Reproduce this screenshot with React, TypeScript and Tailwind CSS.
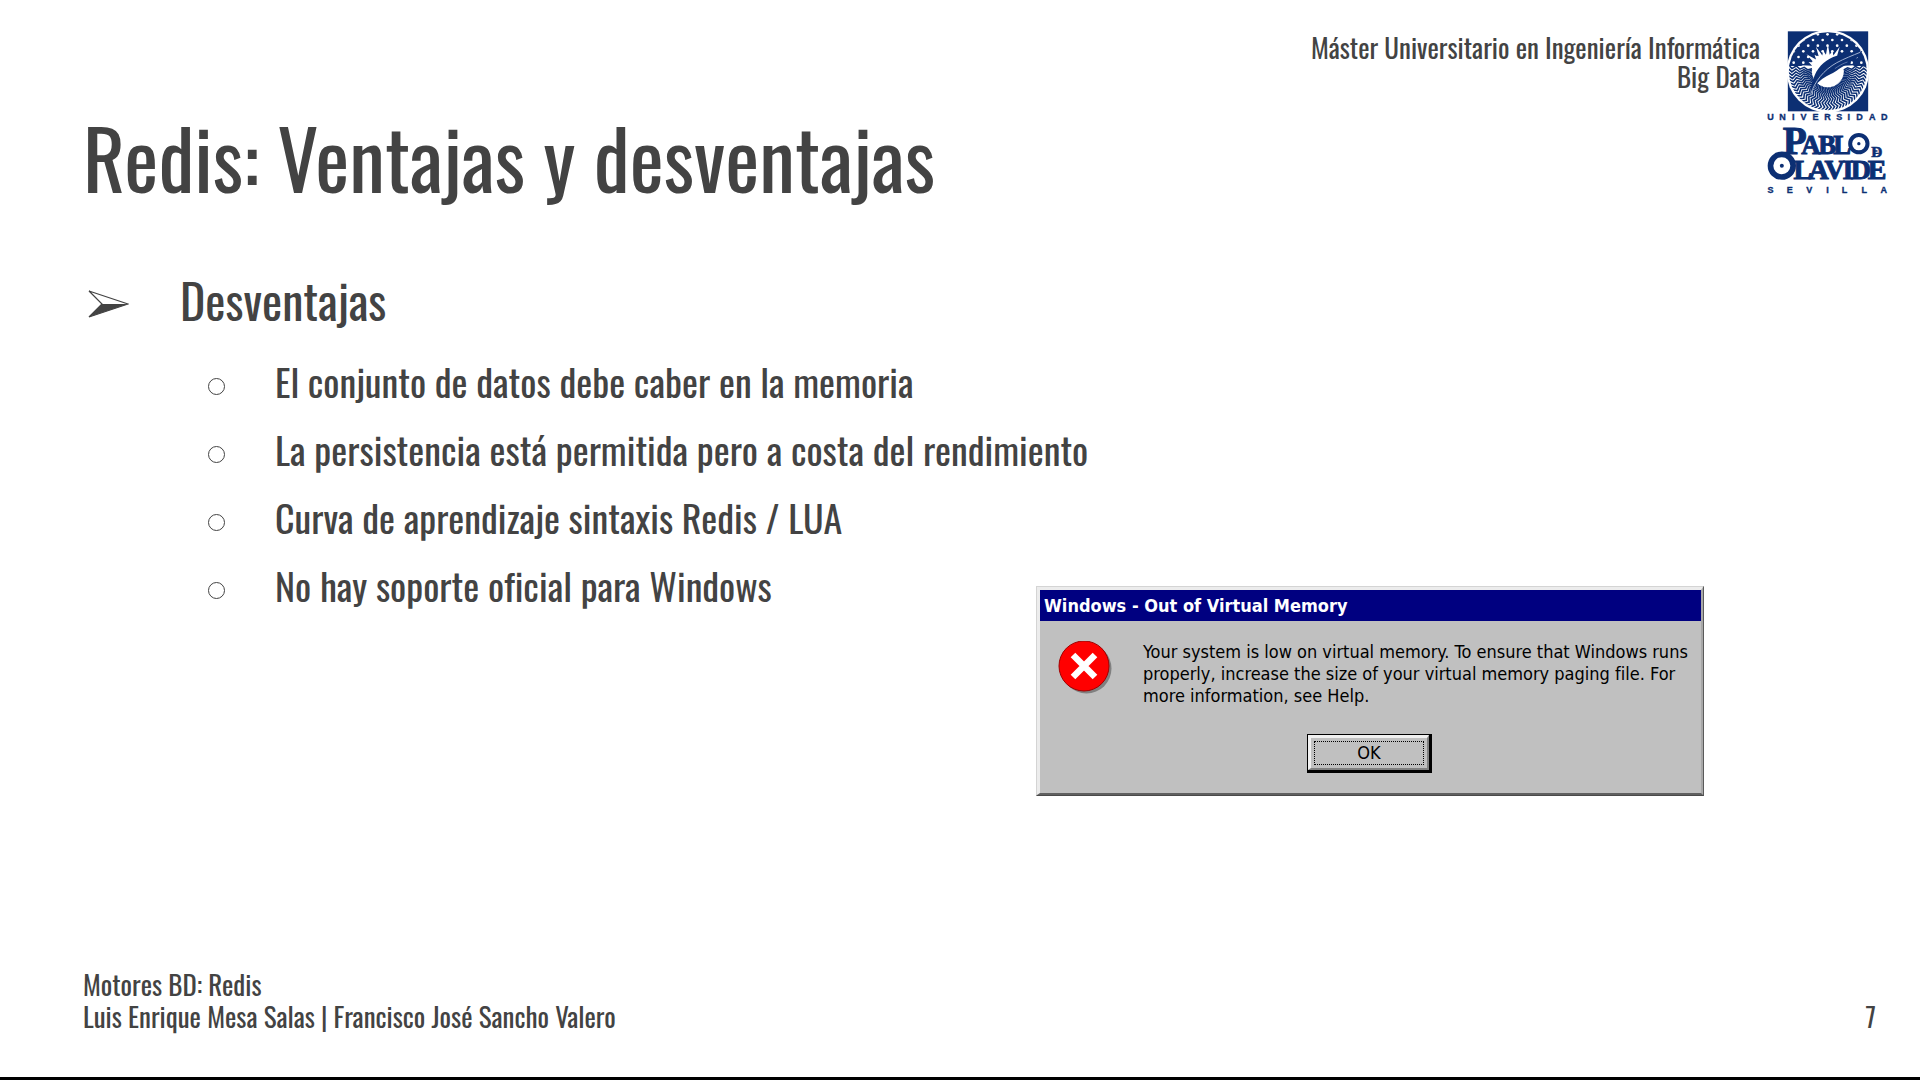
const NAVY = "#0c2f73";

const items = [
  "El conjunto de datos debe caber en la memoria",
  "La persistencia está permitida pero a costa del rendimiento",
  "Curva de aprendizaje sintaxis Redis / LUA",
  "No hay soporte oficial para Windows",
];

const CX = 265;
const CY = 184;

/* Wavy rays that fill the lower half of the seal. */
function wavyRay(index: number, count: number) {
  const base = (index / (count - 1)) * Math.PI * 1.08 - 0.13;
  const points: string[] = [];
  for (let step = 0; step <= 6; step++) {
    const radius = 48 + step * 12;
    const angle = base + (step % 2 === 0 ? 0.045 : -0.045);
    points.push(
      `${(CX + radius * Math.cos(angle)).toFixed(1)},${(CY + radius * Math.sin(angle)).toFixed(1)}`,
    );
  }
  return points.join(" ");
}

/* Spiked outline of the sun. */
function sunPoints() {
  const points: string[] = [];
  const spikes = 28;
  for (let i = 0; i < spikes * 2; i++) {
    const angle = (i / (spikes * 2)) * Math.PI * 2 - Math.PI / 2;
    const radius = i % 2 === 0 ? (i % 4 === 0 ? 82 : 64) : 50;
    points.push(`${(CX + radius * Math.cos(angle)).toFixed(1)},${(CY + radius * Math.sin(angle)).toFixed(1)}`);
  }
  return points.join(" ");
}

const stars: [number, number][] = [];
for (let row = 0; row < 6; row++) {
  for (let col = 0; col < 9; col++) {
    stars.push([148 + col * 29 + (row % 2) * 14.5, 73 + row * 17]);
  }
}

function Logo() {
  return (
    <svg
      viewBox="80 60 368 495"
      className="h-[165px] w-[123px] shrink-0"
      role="img"
      aria-label="Universidad Pablo de Olavide, Sevilla"
    >
      <defs>
        <clipPath id="seal">
          <circle cx={CX} cy={CY} r="117" />
        </clipPath>
        <clipPath id="sky">
          <rect x="140" y="60" width="250" height="108" />
        </clipPath>
      </defs>
      <rect x="145" y="64" width="241" height="240" fill={NAVY} />
      <circle cx={CX} cy={CY} r="124" fill="#fff" />
      <g clipPath="url(#seal)">
        {Array.from({ length: 38 }, (_, i) => (
          <polyline key={i} points={wavyRay(i, 38)} fill="none" stroke={NAVY} strokeWidth="4.6" />
        ))}
        <g clipPath="url(#sky)">
          <rect x="140" y="60" width="250" height="108" fill={NAVY} />
          {stars.map(([x, y]) => (
            <circle key={`${x}-${y}`} cx={x} cy={y} r="4" fill="#fff" />
          ))}
          <polygon points={sunPoints()} fill="#fff" />
        </g>
      </g>
      <path
        d="M211 258C213 236 216 216 226 195C238 166 262 146 292 137C318 129 345 129 368 123C364 139 348 148 330 152C338 154 336 159 324 162C304 171 292 184 274 192C256 200 240 212 229 224C221 234 217 246 211 258Z"
        fill={NAVY}
      />
      <path d="M213 254C226 214 252 180 292 158C314 146 340 136 362 127" fill="none" stroke="#9fb0d0" strokeWidth="3" />
      <path d="M286 176C298 168 310 160 324 156" fill="none" stroke="#7f95c0" strokeWidth="2" />
      <g fill={NAVY} stroke={NAVY} textAnchor="middle">
        <g className="font-['Liberation_Sans'] font-bold" fontSize="27" strokeWidth="1">
          <text x="93 129 161 192 228 264 299 328 360 398 434" y="330">
            UNIVERSIDAD
          </text>
          <text x="93 151 209 264 315 374 433" y="550">
            SEVILLA
          </text>
        </g>
        <g className="font-['Liberation_Serif'] font-bold" strokeWidth="3">
          <text x="166" y="431" fontSize="118">
            P
          </text>
          <text x="214 263 308" y="431" fontSize="80">
            ABL
          </text>
          <text x="190 237 285 325 364 413" y="507" fontSize="84">
            LAVIDE
          </text>
          <text x="412" y="440" fontSize="46" strokeWidth="2">
            D
          </text>
        </g>
      </g>
      <path d="M402 430H418M402 423H414" stroke={NAVY} strokeWidth="4" />
      <circle cx="358" cy="401" r="26" fill="#fff" stroke={NAVY} strokeWidth="12" />
      <circle cx="358" cy="401" r="5" fill={NAVY} />
      <circle cx="127" cy="467" r="34" fill="#fff" stroke={NAVY} strokeWidth="17" />
      <circle cx="127" cy="467" r="6" fill={NAVY} />
    </svg>
  );
}

function ErrorDialog() {
  return (
    <section
      aria-labelledby="dialog-title"
      className="-mt-[33px] mr-[216px] w-[668px] self-end border border-t-[#d4d4d4] border-r-[#5a5a5a] border-b-[#4a4a4a] border-l-[#d4d4d4] bg-[#c0c0c0] font-['DejaVu_Sans_Condensed','DejaVu_Sans',sans-serif] text-lg leading-[22px] text-black"
    >
      <div className="border-t-[3px] border-r-2 border-b-2 border-l-[3px] border-t-[#ececec] border-r-[#a8a8a8] border-b-[#606060] border-l-[#ececec] pb-5">
        <h2 id="dialog-title" className="bg-[#000080] pl-1 leading-[31px] font-bold text-white">
          Windows - Out of Virtual Memory
        </h2>
        <div className="flex items-start pt-5 pl-[18px]">
          <svg viewBox="0 0 54 54" className="h-[54px] w-[54px] shrink-0" aria-hidden="true">
            <circle cx="28.5" cy="27.5" r="25" fill="#808080" />
            <circle cx="26" cy="25" r="25" fill="#ff0000" stroke="#a00000" strokeWidth="1" />
            <path d="M15 14L37 36M37 14L15 36" stroke="#fff" strokeWidth="6.5" />
          </svg>
          <p className="ml-[31px]">
            Your system is low on virtual memory. To ensure that Windows runs
            <br />
            properly, increase the size of your virtual memory paging file. For
            <br />
            more information, see Help.
          </p>
        </div>
        <div className="mt-[27px] flex justify-center pr-0.5">
          <button
            type="button"
            className="h-[39px] w-[125px] border border-r-[3px] border-b-[3px] border-black bg-[#c0c0c0]"
          >
            <span className="flex h-full items-center justify-center border-t-[3px] border-r-2 border-b-2 border-l-[3px] border-t-[#f0f0f0] border-r-[#808080] border-b-[#808080] border-l-[#f0f0f0] p-[3px]">
              <span className="flex h-full w-full items-center justify-center border border-dotted border-black">
                OK
              </span>
            </span>
          </button>
        </div>
      </div>
    </section>
  );
}

export default function App() {
  return (
    <div className="flex min-h-screen flex-col border-b-[3px] border-black bg-white font-['Oswald',sans-serif] text-[#434343] [font-variant-ligatures:none]">
      <header className="flex items-start justify-between pr-[31px] pl-[83px]">
        <h1 className="pt-[108px] text-[81px] leading-[96px]">Redis: Ventajas y desventajas</h1>
        <div className="flex items-start gap-1.5 pt-[30px]">
          <p className="pt-[3px] text-right text-[27px] leading-[29px]">
            Máster Universitario en Ingeniería Informática
            <br />
            Big Data
          </p>
          <Logo />
        </div>
      </header>

      <main className="flex flex-1 flex-col pt-16">
        <h2 className="flex items-center pl-[88px] text-5xl leading-[64px]">
          <svg viewBox="0 0 41 28" className="mt-2 mr-[51px] h-7 w-[41px]" aria-hidden="true">
            <path d="M1 1L40 14L1 27L14 14Z" fill="none" stroke="#434343" strokeWidth="1.2" />
            <path d="M14 14H40L1 27Z" fill="#434343" />
          </svg>
          Desventajas
        </h2>
        <ul className="mt-[15px] pl-[208px] text-[38px] leading-[68px]">
          {items.map((item) => (
            <li key={item} className="flex items-center">
              <span className="mt-2.5 mr-[50px] size-[17px] rounded-full border border-[#434343]" />
              {item}
            </li>
          ))}
        </ul>
        <ErrorDialog />
      </main>

      <footer className="flex items-end justify-between pr-11 pb-[45px] pl-[83px] text-[27px] leading-8">
        <p>
          Motores BD: Redis
          <br />
          Luis Enrique Mesa Salas | Francisco José Sancho Valero
        </p>
        <span>7</span>
      </footer>
    </div>
  );
}
